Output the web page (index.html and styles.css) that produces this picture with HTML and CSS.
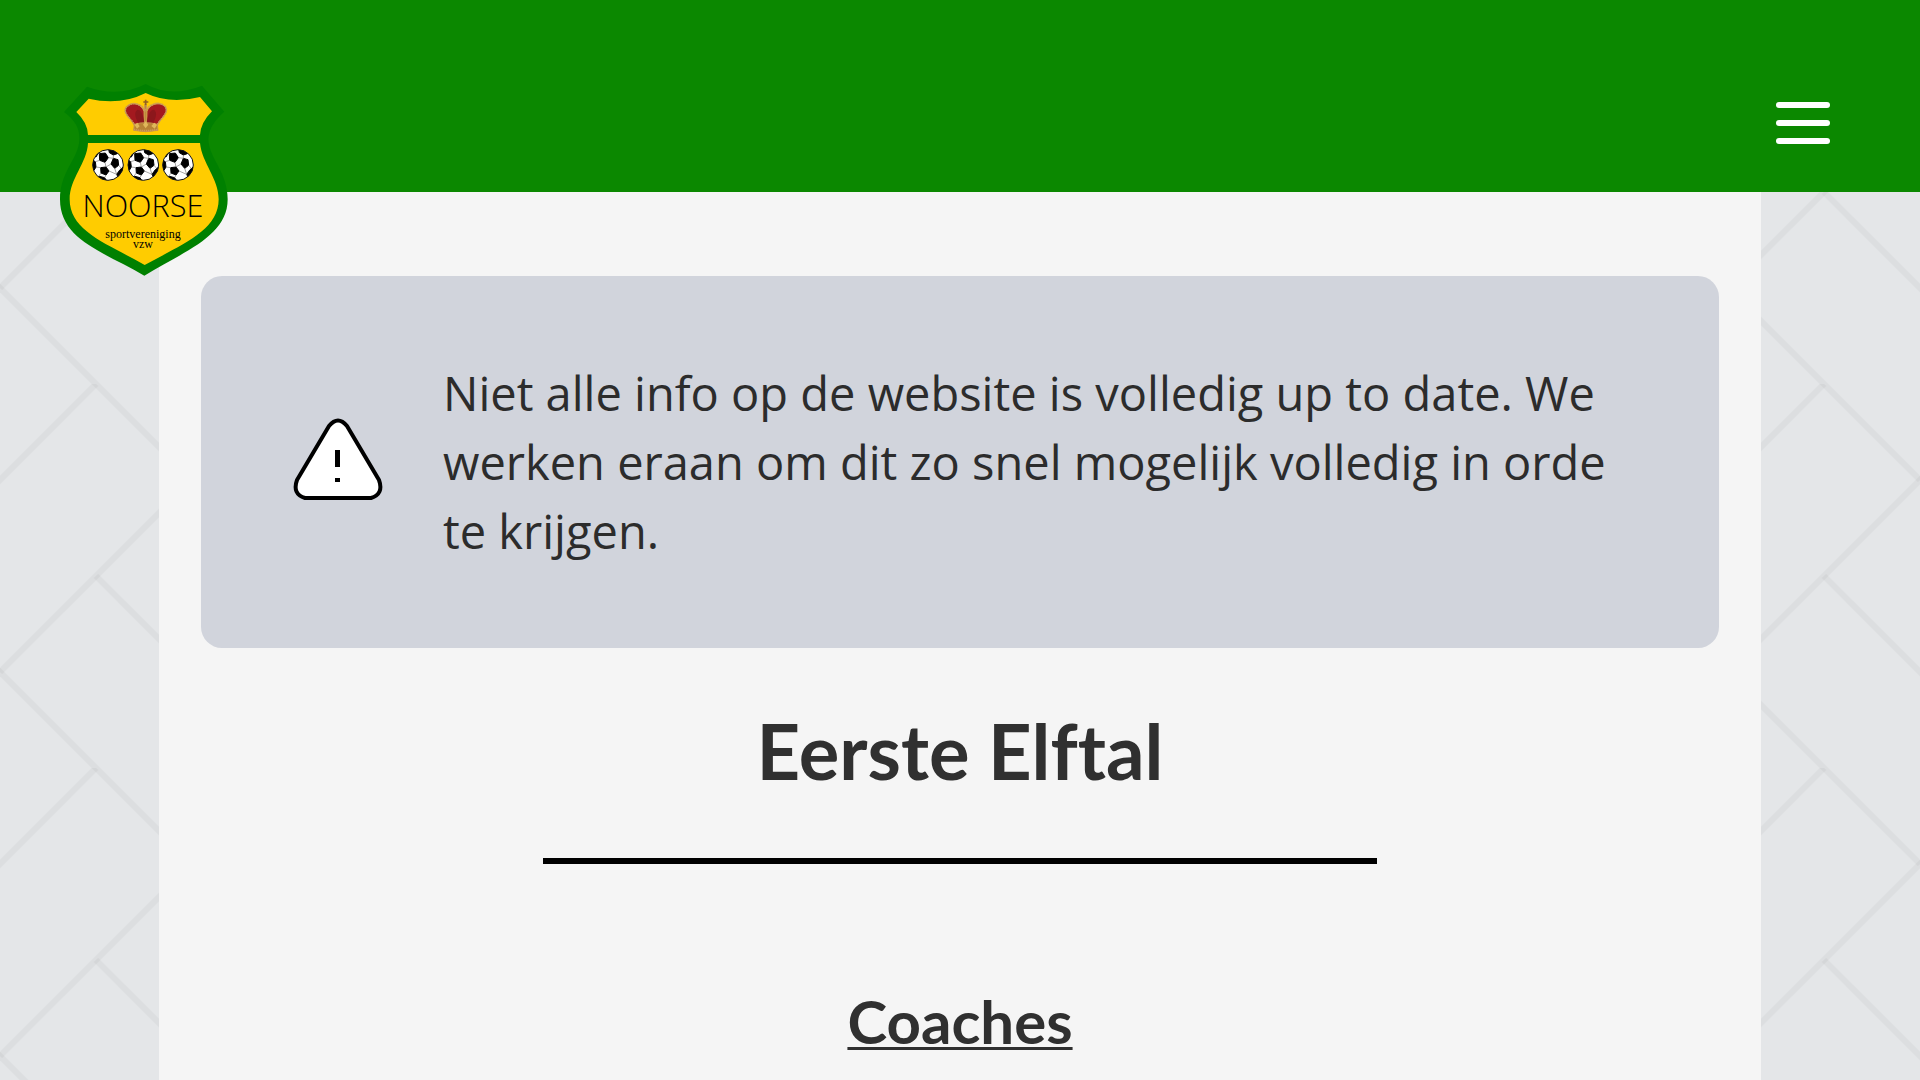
FILE: index.html
```html
<!DOCTYPE html>
<html lang="nl">
<head>
<meta charset="utf-8">
<meta name="viewport" content="width=device-width, initial-scale=1">
<title>Noorse SV - Eerste Elftal</title>
<link rel="stylesheet" href="styles.css">
</head>
<body>
<header class="header">
  <a class="logo" href="#" aria-label="Noorse sportvereniging vzw">
    <svg class="logo-image" viewBox="60 42 504 576" aria-hidden="true">
      <defs>
        <clipPath id="ball-clip"><circle r="46"/></clipPath>
        <g id="ball">
          <circle r="46" fill="#fff"/>
          <g clip-path="url(#ball-clip)">
            <path stroke="#000" stroke-width="3" d="M-26-34-8-36 1-22-9-8-25-14ZM16-20 30-16 32 1 20 10 9-3ZM-22 8-6 6 3 18-6 30-21 24ZM2-48 24-44 28-34 16-30 4-37ZM-48-16-38-10-36 6-42 16-50 8ZM36 14 46 6 44 26 30 36 26 28ZM-26 34-10 38-4 48-20 50-34 40ZM-44-28-34-40-28-38-36-24Z"/>
            <path d="M1-22 16-20M-9-8-6 6M9-3-6 6M-25-14-38-10M16-30 16-20M32 1 40 10M20 10 26 28M3 18 26 28M-6 30-10 38M-22 8-36 6M-21 24-30 36" fill="none" stroke="#777" stroke-width="2"/>
          </g>
          <circle r="46" fill="none" stroke="#111" stroke-width="3"/>
        </g>
      </defs>
      <path fill="#008000" d="M141 50Q235 84 317 42 392 84 486 47L553 125Q497 174 507 222C514 270 563 310 563 388 563 500 430 545 313 617 190 545 60 510 60 388 60 310 109 270 117 220 122 180 110 155 72 126Z"/>
      <path fill="#fc0" d="M146 86Q240 108 317 69 388 104 480 81L516 124Q482 158 480 195H144Q143 158 109 126ZM144 219H480C486 280 536 325 536 388 536 484 420 526 314 585 200 520 89 484 89 388 89 325 141 280 144 219Z"/>
      <g stroke="#c9974b" stroke-width="3">
        <path fill="#a3191f" d="M283 166C274 145 244 128 261 109 279 92 307 105 312 125L313 165ZM351 166C360 145 391 128 374 109 356 92 326 105 321 125L320 165Z"/>
        <path fill="#8c171c" stroke="none" d="M296 160C286 145 281 127 292 119 306 119 312 143 313 164ZM338 160C348 145 353 127 342 119 328 119 321 143 320 164Z"/>
        <path fill="#b78334" d="M283 163Q317 153 352 163L354 181Q317 189 281 181ZM314 103H319V164H314Z"/>
      </g>
      <path fill="none" stroke="#c99a5c" stroke-width="5" stroke-dasharray="4 2" d="M284 165C272 144 247 130 259 112 280 89 309 106 315 122 328 104 356 90 376 110 388 130 361 145 352 165M282 178Q317 186 354 178"/>
      <path fill="none" stroke="#936022" stroke-width="5" d="M317 89V105M310 96H325"/>
      <path fill="#e0b85a" d="M284 165 292 158 299 169 291 176ZM309 164 317 154 325 164 317 175ZM334 168 343 158 351 165 344 176Z"/>
      <use href="#ball" x="204" y="285"/>
      <use href="#ball" x="310" y="285"/>
      <use href="#ball" x="414" y="285"/>
      <text class="logo-name" x="309" y="441" text-anchor="middle">NOORSE</text>
      <text class="logo-sub" x="309" y="504" text-anchor="middle">sportvereniging</text>
      <text class="logo-sub" x="309" y="533" text-anchor="middle">vzw</text>
    </svg>
  </a>
  <button class="menu" type="button" aria-label="Menu">
    <span class="menu-bar"></span>
    <span class="menu-bar"></span>
    <span class="menu-bar"></span>
  </button>
</header>
<main class="content">
  <div class="notice" role="alert">
    <svg class="notice-icon" viewBox="0 0 90 82" aria-hidden="true">
      <path d="M36 8Q45-3 54 8L86 62Q91 76 78 80H12Q-1 76 4 62Z" fill="#fff" stroke="#000" stroke-width="4" stroke-linejoin="round"/>
      <path d="M42 32H47V49H42ZM42 60H47V64H42Z"/>
    </svg>
    <p class="notice-text">Niet alle info op de website is volledig up to date. We werken eraan om dit zo snel mogelijk volledig in orde te krijgen.</p>
  </div>
  <h1 class="title">Eerste Elftal</h1>
  <hr class="rule">
  <h2 class="section-title">Coaches</h2>
</main>
</body>
</html>
```
FILE: styles.css
```css
* {
  box-sizing: border-box;
}

body {
  margin: 0;
  min-height: 100vh;
  display: flex;
  flex-direction: column;
  color: #303030;
  font-family: Lato, sans-serif;
  background-color: #e4e6e8;
  background-image: url("data:image/svg+xml,%3Csvg xmlns='http://www.w3.org/2000/svg' width='192' height='384'%3E%3Cg stroke='%23000' stroke-opacity='.035' stroke-width='6'%3E%3Cpath d='M96 0L-192 288'/%3E%3Cpath d='M288 0L0 288'/%3E%3Cpath d='M-96 192L192 480'/%3E%3Cpath d='M-96-192L192 96'/%3E%3Cpath d='M96 192L384 480'/%3E%3C/g%3E%3C/svg%3E");
}

.header {
  display: flex;
  justify-content: space-between;
  align-items: flex-start;
  height: 192px;
  padding: 84px 90px 0 60px;
  background: #0b8800;
}

.logo {
  position: relative;
  z-index: 1;
}

.logo-image {
  display: block;
  width: 168px;
  height: 192px;
}

.logo-name {
  font: 300 92px "Open Sans", sans-serif;
}

.logo-sub {
  font: 36px "Liberation Serif", serif;
}

.menu {
  display: flex;
  flex-direction: column;
  gap: 12px;
  margin-top: 18px;
  padding: 0;
  border: 0;
  background: none;
}

.menu-bar {
  width: 54px;
  height: 6px;
  border-radius: 3px;
  background: #fff;
}

.content {
  flex: 1;
  margin: 0 159px;
  padding: 84px 42px 0;
  background: #f5f5f5;
}

.notice {
  display: flex;
  align-items: center;
  gap: 60px;
  padding: 83px 92px 82px;
  border-radius: 21px;
  background: #d1d4dc;
}

.notice-icon {
  flex: none;
  width: 90px;
  height: 82px;
  margin-bottom: 8px;
}

.notice-text {
  margin: 0;
  color: #2c2c2c;
  font: 47px/69px "Open Sans", sans-serif;
}

.title {
  margin: 54px 0 58px;
  font-size: 76px;
  line-height: 98px;
  text-align: center;
  font-variant-ligatures: none;
}

.rule {
  width: 55%;
  height: 6px;
  margin: 0 auto;
  border: 0;
  background: #000;
}

.section-title {
  margin: 117px 0 0;
  font-size: 60px;
  line-height: 80px;
  text-align: center;
  text-decoration: underline;
  text-decoration-thickness: 3px;
  text-underline-offset: 3px;
}
```
